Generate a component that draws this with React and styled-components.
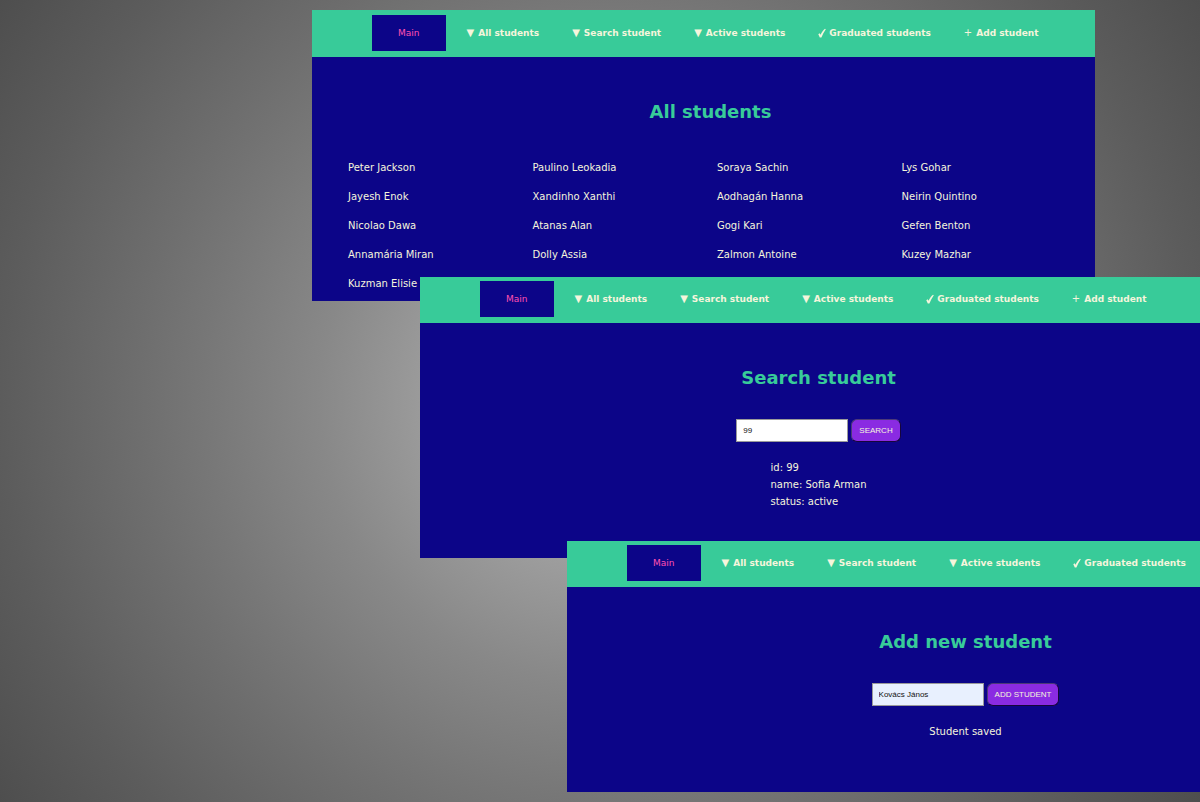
import React from 'react';
import styled, { createGlobalStyle } from 'styled-components';

const GlobalStyle = createGlobalStyle`
  * { box-sizing: border-box; }
  html, body, #root { height: 100%; }
  body { margin: 0; font-family: 'DejaVu Sans', Verdana, sans-serif; font-size: 10px; }
`;

const Desktop = styled.main`
  position: relative;
  min-height: 100%;
  overflow: hidden;
  background: radial-gradient(circle at center, #b0b0b0 0%, #9e9e9e 22%, #888888 39%, #777777 55%, #6e6e6e 64%, #5c5c5c 83%, #4e4e4e 100%);
`;

const Window = styled.section`
  position: absolute;
  left: ${(p) => p.$x}px;
  top: ${(p) => p.$y}px;
  width: 783px;
  height: ${(p) => p.$height}px;
  overflow: hidden;
  background: #0c0588;
  color: #f5f5dc;
`;

const Nav = styled.nav`
  display: flex;
  align-items: flex-start;
  gap: 3px;
  padding: ${(p) => (p.$tall ? 5 : 4)}px 0 6px 60px;
  background: #38cb99;
`;

const NavLink = styled.a`
  display: flex;
  align-items: center;
  gap: ${(p) => (p.$tight ? 3 : 4)}px;
  padding: 0 15px;
  font-size: 9px;
  line-height: 36px;
  font-weight: bold;
  color: #f5f5dc;
  text-decoration: none;
  white-space: nowrap;
`;

const MainLink = styled(NavLink)`
  margin-right: 3px;
  padding: 0 26px;
  font-weight: normal;
  color: #ff4fb0;
  background: #0c0588;
`;

const Glyph = styled.span`
  font-size: 10px;
  font-weight: normal;
`;

const CheckIcon = styled.svg`
  width: 8px;
  height: 10px;
  fill: currentColor;
`;

const Body = styled.div`
  display: flex;
  flex-direction: column;
  align-items: center;
  padding: 41px 0 0 14px;
`;

const Title = styled.h2`
  margin: 0 0 27px;
  font-size: 18px;
  line-height: 28px;
  color: #38cb99;
`;

const Students = styled.ul`
  display: grid;
  grid-template-columns: repeat(4, 1fr);
  align-self: stretch;
  margin: 0;
  padding: 0 9px 0 22px;
  list-style: none;
  line-height: 29px;
`;

const Form = styled.form`
  display: flex;
  gap: 3px;
`;

const Field = styled.input`
  width: 112px;
  height: 23px;
  padding: 0 6px;
  border: 1px solid #9a9a9a;
  border-radius: 0;
  background: ${(p) => (p.$filled ? '#e8f0fe' : '#ffffff')};
  color: #111111;
  font: 8px 'Liberation Sans', Arial, sans-serif;
`;

const Submit = styled.button`
  height: 23px;
  padding: 0 6px;
  border: 1px solid;
  border-color: #4c3a78 #16063c #16063c #4c3a78;
  border-radius: 6px;
  padding: 0 7px;
  background: #8a2be2;
  color: #f5f5dc;
  font: 8px 'Liberation Sans', Arial, sans-serif;
  text-transform: uppercase;
  white-space: nowrap;
`;

const Details = styled.div`
  margin-top: 17px;
  line-height: 17px;
`;

const links = [
  ['▼', 'All students'],
  ['▼', 'Search student'],
  ['▼', 'Active students'],
  ['check', 'Graduated students'],
  ['+', 'Add student'],
];

const students = [
  'Peter Jackson', 'Paulino Leokadia', 'Soraya Sachin', 'Lys Gohar',
  'Jayesh Enok', 'Xandinho Xanthi', 'Aodhagán Hanna', 'Neirin Quintino',
  'Nicolao Dawa', 'Atanas Alan', 'Gogi Kari', 'Gefen Benton',
  'Annamária Miran', 'Dolly Assia', 'Zalmon Antoine', 'Kuzey Mazhar',
  'Kuzman Elisie',
];

function LinkIcon({ name }) {
  if (name === 'check') {
    return (
      <CheckIcon viewBox="0 0 8 10" aria-hidden="true">
        <path d="M0.3 6.3 L1.6 5.3 L2.6 6.8 C3.6 4.6 5 2.4 7 0.8 L7.8 1.2 C6 3.8 4.6 6.4 3.4 9.4 L1.8 9.6 Z" />
      </CheckIcon>
    );
  }
  return <Glyph aria-hidden="true">{name}</Glyph>;
}

function StudentWindow({ x, y, height, title, tall, hidden = [], children }) {
  return (
    <Window $x={x} $y={y} $height={height} aria-label={title}>
      <Nav $tall={tall}>
        <MainLink href="#main">Main</MainLink>
        {links.filter(([, label]) => !hidden.includes(label)).map(([icon, label]) => (
          <NavLink href="#" key={label} $tight={icon === 'check'}>
            <LinkIcon name={icon} />
            {label}
          </NavLink>
        ))}
      </Nav>
      <Body>
        <Title>{title}</Title>
        {children}
      </Body>
    </Window>
  );
}

export default function App() {
  return (
    <>
      <GlobalStyle />
      <Desktop>
        <StudentWindow x={312} y={10} height={291} title="All students" tall>
          <Students>
            {students.map((name) => <li key={name}>{name}</li>)}
          </Students>
        </StudentWindow>
        <StudentWindow x={420} y={277} height={281} title="Search student">
          <Form onSubmit={(e) => e.preventDefault()}>
            <Field aria-label="Student id" defaultValue="99" />
            <Submit>Search</Submit>
          </Form>
          <Details>
            <div>id: 99</div>
            <div>name: Sofia Arman</div>
            <div>status: active</div>
          </Details>
        </StudentWindow>
        <StudentWindow x={567} y={541} height={251} title="Add new student" hidden={['Add student']}>
          <Form onSubmit={(e) => e.preventDefault()}>
            <Field $filled aria-label="Student name" defaultValue="Kovács János" />
            <Submit>Add student</Submit>
          </Form>
          <Details role="status">Student saved</Details>
        </StudentWindow>
      </Desktop>
    </>
  );
}
